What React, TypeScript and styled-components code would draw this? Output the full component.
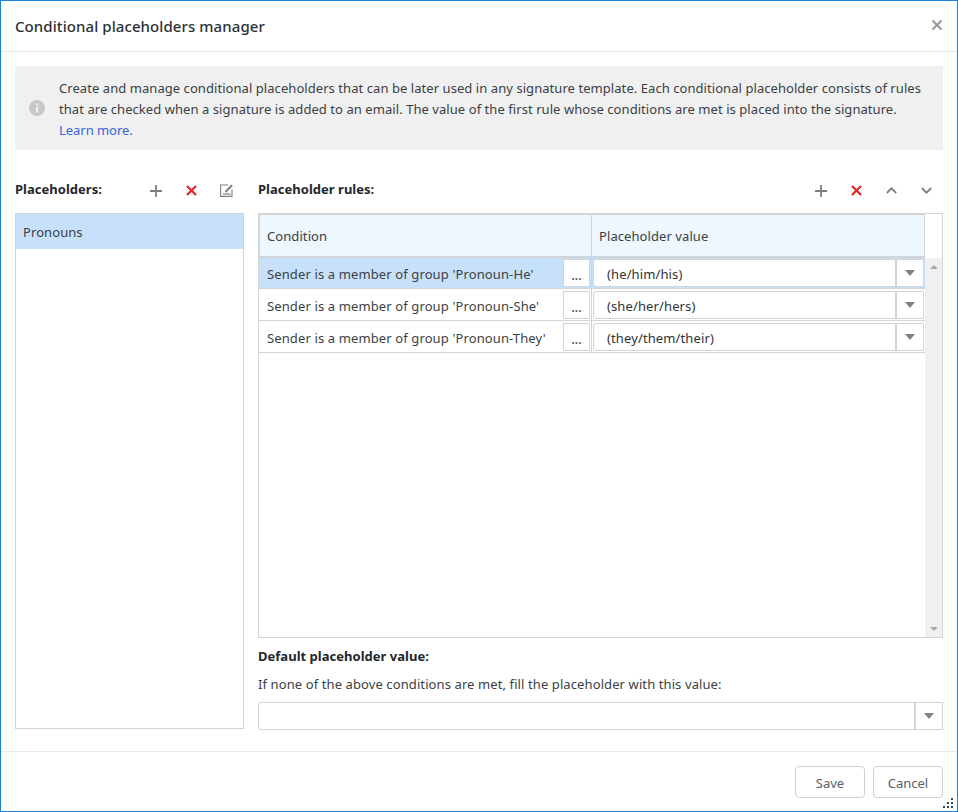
import React from "react";
import styled, { createGlobalStyle } from "styled-components";

const Global = createGlobalStyle`
  html, body { margin: 0; padding: 0; background: #fff; }
  body { font-family: "Noto Sans", "Open Sans", "Liberation Sans", sans-serif; font-size: 13px; color: #333; letter-spacing: 0.08px; }
  * { box-sizing: border-box; }
`;

const Dialog = styled.div`
  width: 958px;
  height: 812px;
  border: 1px solid #1b82d6;
  display: flex;
  flex-direction: column;
  position: relative;
  background: #fff;
`;
const Header = styled.header`
  height: 51px;
  flex: none;
  border-bottom: 1px solid #e9ebec;
  display: flex;
  align-items: center;
  justify-content: space-between;
  padding: 0 13px 0 14px;
`;
const Title = styled.h1`
  margin: 0;
  font-size: 15px;
  font-weight: 500;
  color: #2b3036;
  letter-spacing: 0.08px;
`;
const Close = styled.button`
  border: 0;
  background: none;
  padding: 0;
  width: 14px;
  height: 14px;
  margin-top: -2px;
  display: flex;
  color: #9a9a9a;
`;
const Body = styled.main`
  flex: 1;
  min-height: 0;
  padding: 14px 14px 21px;
  display: flex;
  flex-direction: column;
`;
const Info = styled.section`
  height: 84px;
  flex: none;
  background: #f0f0f0;
  display: flex;
  align-items: center;
  padding: 0 14px;
  gap: 14px;
`;
const InfoIcon = styled.svg`
  flex: none;
`;
const InfoText = styled.p`
  margin: 0;
  padding-top: 2px;
  line-height: 21px;
  color: #3a3f44;
  letter-spacing: 0.06px;
`;
const Link = styled.a`
  color: #3565d9;
  letter-spacing: -0.04px;
`;
const Columns = styled.div`
  flex: 1;
  min-height: 0;
  display: flex;
  gap: 14px;
  margin-top: 26px;
`;
const LeftCol = styled.div`
  width: 229px;
  display: flex;
  flex-direction: column;
`;
const RightCol = styled.div`
  flex: 1;
  min-width: 0;
  display: flex;
  flex-direction: column;
`;
const Bar = styled.div`
  height: 27px;
  flex: none;
  margin-bottom: 10px;
  display: flex;
  align-items: center;
  justify-content: space-between;
`;
const Label = styled.div`
  font-weight: 700;
  font-size: 13px;
  color: #23272b;
  letter-spacing: 0.02px;
`;
const BarLabel = styled(Label)`
  margin-bottom: 2px;
`;
const Tools = styled.div<{ $inset: number }>`
  display: flex;
  align-items: center;
  gap: 11px;
  margin-top: 2px;
  margin-right: ${(p) => p.$inset}px;
`;
const ToolBtn = styled.button<{ $tone?: string }>`
  border: 0;
  background: none;
  padding: 0;
  width: 24px;
  height: 24px;
  display: flex;
  align-items: center;
  justify-content: center;
  color: ${(p) => p.$tone || "#808080"};
`;
const List = styled.div`
  flex: 1;
  margin-bottom: 1px;
  border: 1px solid #d2d5d8;
`;
const ListItem = styled.div`
  height: 35px;
  background: #c8e1fb;
  display: flex;
  align-items: center;
  padding: 0 7px;
  color: #3a3f44;
`;
const Grid = styled.div`
  height: 425px;
  flex: none;
  border: 1px solid #d2d5d8;
  display: grid;
  grid-template-columns: 1fr 17px;
  grid-template-rows: 44px 1fr;
`;
const GridHead = styled.div`
  display: grid;
  grid-template-columns: 331px 334px;
  border-top: 1px solid #d2d5d8;
  border-left: 1px solid #d2d5d8;
  border-bottom: 2px solid #d2d5d8;
  background: #eef6fe;
`;
const HeadCell = styled.div<{ $divider?: boolean }>`
  display: flex;
  align-items: center;
  padding-left: 7px;
  color: #3a3f44;
  border-left: ${(p) => (p.$divider ? "1px solid #d2d5d8" : "0")};
  border-right: ${(p) => (p.$divider ? "1px solid #d2d5d8" : "0")};
`;
const Corner = styled.div``;
const Rows = styled.div`
  display: flex;
  flex-direction: column;
  grid-row: 2;
`;
const CondCell = styled.div`
  display: flex;
  align-items: center;
  justify-content: space-between;
  padding: 2px 1px 2px 8px;
  border-right: 1px solid #d2d5d8;
  color: #3a3f44;
  letter-spacing: 0.12px;
`;
const CondText = styled.span`
  padding-top: 2px;
`;
const ValueCell = styled.div`
  display: flex;
  padding: 2px 1px;
`;
const Row = styled.div<{ $active?: boolean }>`
  height: 32px;
  display: grid;
  grid-template-columns: 333px 333px;
  border-bottom: 1px solid #d2d5d8;
  background: ${(p) => (p.$active ? "#c8e1fb" : "#fff")};
  &:first-child {
    height: 31px;
  }
  &:first-child ${CondCell}, &:first-child ${ValueCell} {
    padding-top: 1px;
    padding-bottom: 1px;
  }
`;
const Dots = styled.button`
  width: 27px;
  height: 28px;
  border: 1px solid #d2d5d8;
  background: #fff;
  padding: 5px 0 0;
  font: inherit;
  font-size: 12px;
  font-weight: 600;
  line-height: 1;
  color: #555;
`;
const Combo = styled.div`
  flex: 1;
  min-width: 0;
  display: flex;
  height: 28px;
  background: #fff;
  border: 1px solid #d2d5d8;
  border-radius: 3px 0 0 3px;
`;
const ComboText = styled.div`
  flex: 1;
  display: flex;
  align-items: center;
  padding: 2px 0 0 13px;
  color: #2f3338;
  letter-spacing: 0.12px;
`;
const Arrow = styled.div`
  width: 28px;
  border-left: 2px solid #d2d5d8;
  display: flex;
  align-items: center;
  justify-content: center;
  flex: none;
`;
const Caret = styled.span`
  width: 0;
  height: 0;
  border-left: 5.5px solid transparent;
  border-right: 5.5px solid transparent;
  border-top: 6px solid #808080;
`;
const Scrollbar = styled.div`
  grid-row: 2;
  grid-column: 2;
  background: #f0f0f0;
  display: flex;
  flex-direction: column;
  align-items: center;
  justify-content: space-between;
  padding: 7px 0 6px;
`;
const ScrollUp = styled.span`
  width: 0;
  height: 0;
  border-left: 4px solid transparent;
  border-right: 4px solid transparent;
  border-bottom: 4px solid #a9a9a9;
`;
const ScrollDown = styled.span`
  width: 0;
  height: 0;
  border-left: 4px solid transparent;
  border-right: 4px solid transparent;
  border-top: 4px solid #a9a9a9;
`;
const DefaultTitle = styled(Label)`
  margin-top: 9px;
  line-height: 18px;
`;
const DefaultHint = styled.div`
  margin-top: 10px;
  line-height: 18px;
  color: #3a3f44;
  letter-spacing: 0.1px;
`;
const DefaultCombo = styled(Combo)`
  flex: none;
  height: 28px;
  margin-top: 9px;
`;
const Footer = styled.footer`
  height: 60px;
  flex: none;
  border-top: 1px solid #e9ebec;
  display: flex;
  justify-content: flex-end;
  gap: 8px;
  padding: 14px 14px 0;
`;
const Btn = styled.button`
  width: 70px;
  height: 32px;
  border: 1px solid #ccd0d4;
  border-radius: 4px;
  background: #fff;
  padding: 2px 0 0;
  font: inherit;
  color: #5a6066;
`;
const Grip = styled.svg`
  position: absolute;
  right: 4px;
  bottom: 3px;
`;

const Plus = () => (
  <svg width="12" height="12" viewBox="0 0 12 12"><path d="M6 0v12M0 6h12" stroke="currentColor" strokeWidth="1.8" /></svg>
);
const Cross = () => (
  <svg width="11" height="11" viewBox="0 0 11 11"><path d="M1 1l9 9M10 1L1 10" stroke="currentColor" strokeWidth="2.2" /></svg>
);
const Edit = () => (
  <svg width="13" height="13" viewBox="0 0 13 13" fill="none">
    <path d="M8 1H.6v11.4H12V5.5" stroke="currentColor" strokeWidth="1.1" />
    <path d="M5.5 8L12 1.2" stroke="currentColor" strokeWidth="2" />
    <path d="M3 10h7.5" stroke="currentColor" strokeWidth="1.2" />
  </svg>
);
const Chevron = ({ up }: { up?: boolean }) => (
  <svg width="11" height="7" viewBox="0 0 11 7" fill="none">
    <path d={up ? "M.8 6l4.7-4.7L10.2 6" : "M.8 1l4.7 4.7L10.2 1"} stroke="currentColor" strokeWidth="1.8" />
  </svg>
);

const rules = [
  { c: "Sender is a member of group 'Pronoun-He'", v: "(he/him/his)" },
  { c: "Sender is a member of group 'Pronoun-She'", v: "(she/her/hers)" },
  { c: "Sender is a member of group 'Pronoun-They'", v: "(they/them/their)" },
];

export default function App() {
  return (
    <Dialog>
      <Global />
      <Header>
        <Title>Conditional placeholders manager</Title>
        <Close aria-label="Close">
          <svg width="14" height="14" viewBox="0 0 14 14"><path d="M2.5 2.5l9 9M11.5 2.5l-9 9" stroke="currentColor" strokeWidth="2.2" /></svg>
        </Close>
      </Header>
      <Body>
        <Info>
          <InfoIcon width="16" height="16" viewBox="0 0 16 16">
            <circle cx="8" cy="8" r="8" fill="#c8c8c8" />
            <rect x="7" y="7" width="2.2" height="5.5" fill="#f0f0f0" />
            <rect x="7" y="3.6" width="2.2" height="2.2" fill="#f0f0f0" />
          </InfoIcon>
          <InfoText>
            Create and manage conditional placeholders that can be later used in any signature template. Each conditional placeholder consists of rules that are checked when a signature is added to an email. The value of the first rule whose conditions are met is placed into the signature.{" "}
            <br />
            <Link>Learn more.</Link>
          </InfoText>
        </Info>
        <Columns>
          <LeftCol>
            <Bar>
              <BarLabel>Placeholders:</BarLabel>
              <Tools $inset={6}>
                <ToolBtn><Plus /></ToolBtn>
                <ToolBtn $tone="#e5232b"><Cross /></ToolBtn>
                <ToolBtn><Edit /></ToolBtn>
              </Tools>
            </Bar>
            <List>
              <ListItem>Pronouns</ListItem>
            </List>
          </LeftCol>
          <RightCol>
            <Bar>
              <BarLabel>Placeholder rules:</BarLabel>
              <Tools $inset={5}>
                <ToolBtn><Plus /></ToolBtn>
                <ToolBtn $tone="#e5232b"><Cross /></ToolBtn>
                <ToolBtn><Chevron up /></ToolBtn>
                <ToolBtn><Chevron /></ToolBtn>
              </Tools>
            </Bar>
            <Grid>
              <GridHead>
                <HeadCell>Condition</HeadCell>
                <HeadCell $divider>Placeholder value</HeadCell>
              </GridHead>
              <Corner />
              <Rows>
                {rules.map((r, i) => (
                  <Row key={r.v} $active={i === 0}>
                    <CondCell>
                      <CondText>{r.c}</CondText>
                      <Dots>...</Dots>
                    </CondCell>
                    <ValueCell>
                      <Combo>
                        <ComboText>{r.v}</ComboText>
                        <Arrow><Caret /></Arrow>
                      </Combo>
                    </ValueCell>
                  </Row>
                ))}
              </Rows>
              <Scrollbar>
                <ScrollUp />
                <ScrollDown />
              </Scrollbar>
            </Grid>
            <DefaultTitle>Default placeholder value:</DefaultTitle>
            <DefaultHint>If none of the above conditions are met, fill the placeholder with this value:</DefaultHint>
            <DefaultCombo>
              <ComboText />
              <Arrow><Caret /></Arrow>
            </DefaultCombo>
          </RightCol>
        </Columns>
      </Body>
      <Footer>
        <Btn>Save</Btn>
        <Btn>Cancel</Btn>
      </Footer>
      <Grip width="10" height="10" viewBox="0 0 10 10" fill="#2a4a6a">
        <rect x="8" y="0" width="2" height="2" />
        <rect x="4" y="4" width="2" height="2" />
        <rect x="8" y="4" width="2" height="2" />
        <rect x="0" y="8" width="2" height="2" />
        <rect x="4" y="8" width="2" height="2" />
        <rect x="8" y="8" width="2" height="2" />
      </Grip>
    </Dialog>
  );
}
